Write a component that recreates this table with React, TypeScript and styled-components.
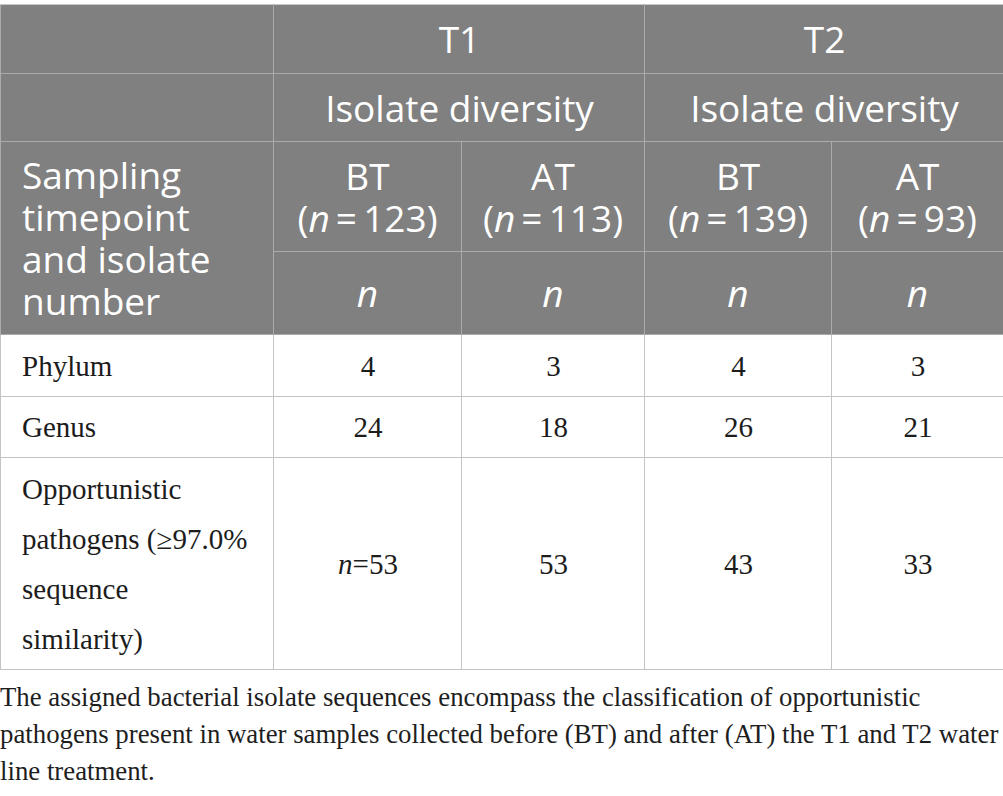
import React from "react";
import styled, { createGlobalStyle } from "styled-components";

const Global = createGlobalStyle`
  html, body { margin: 0; padding: 0; background: #ffffff; }
  body { font-family: "Liberation Serif", "Times New Roman", serif; }
`;

const Page = styled.div`
  padding-top: 4px;
  width: 1003px;
`;

const Table = styled.table`
  width: 1003px;
  border-collapse: collapse;
  table-layout: fixed;
`;

const HeadRow = styled.tr<{ $h: number }>`
  height: ${(p) => p.$h}px;
`;

const HeadCell = styled.th<{ $align?: "left" | "center"; $tight?: boolean }>`
  background: #808080;
  color: #ffffff;
  font-family: "Open Sans", "DejaVu Sans", sans-serif;
  font-weight: 400;
  font-size: 37px;
  line-height: 42px;
  text-align: ${(p) => p.$align ?? "center"};
  vertical-align: middle;
  padding: ${(p) => (p.$tight ? "0 8px" : "0 20px 0 21px")};
  border: 1px solid #ababab;
  border-top-color: #c8c8c8;
  white-space: nowrap;
  em { font-style: italic; }
`;

const WrapHeadCell = styled(HeadCell)`
  white-space: normal;
`;

const Line = styled.span`
  display: block;
  height: 42px;
`;

const BodyRow = styled.tr``;

const BodyCell = styled.td<{ $align?: "left" | "center" }>`
  font-family: "Liberation Serif", "Times New Roman", serif;
  font-size: 29px;
  line-height: 50px;
  color: #1c1c1c;
  text-align: ${(p) => p.$align ?? "center"};
  vertical-align: middle;
  padding: 5.5px 20px 5px 21px;
  border: 1px solid #c4c4c4;
  em { font-style: italic; }
`;

const Caption = styled.p`
  margin: 9px 0 0;
  font-family: "Liberation Serif", "Times New Roman", serif;
  font-size: 26.8px;
  line-height: 37px;
  color: #1e1e1e;
  white-space: nowrap;
`;

const groups = [
  { bt: "123", at: "113" },
  { bt: "139", at: "93" },
];

const rows: { label: React.ReactNode; values: React.ReactNode[] }[] = [
  { label: "Phylum", values: ["4", "3", "4", "3"] },
  { label: "Genus", values: ["24", "18", "26", "21"] },
  {
    label: "Opportunistic pathogens (≥97.0% sequence similarity)",
    values: [
      <>
        <em>n</em>=53
      </>,
      "53",
      "43",
      "33",
    ],
  },
];

const Count = ({ v }: { v: string }) => (
  <>
    (<em>n</em>{"\u2009=\u2009"}
    {v})
  </>
);

export default function App() {
  return (
    <Page>
      <Global />
      <Table>
        <colgroup>
          <col style={{ width: 273 }} />
          <col style={{ width: 188 }} />
          <col style={{ width: 183 }} />
          <col style={{ width: 187 }} />
          <col style={{ width: 172 }} />
        </colgroup>
        <thead>
          <HeadRow $h={69}>
            <HeadCell />
            <HeadCell colSpan={2}>T1</HeadCell>
            <HeadCell colSpan={2}>T2</HeadCell>
          </HeadRow>
          <HeadRow $h={68}>
            <HeadCell />
            <HeadCell colSpan={2}>Isolate diversity</HeadCell>
            <HeadCell colSpan={2}>Isolate diversity</HeadCell>
          </HeadRow>
          <HeadRow $h={110}>
            <WrapHeadCell rowSpan={2} $align="left">
              Sampling timepoint and isolate number
            </WrapHeadCell>
            {groups.map((g, i) => (
              <React.Fragment key={i}>
                <HeadCell $tight>
                  <Line>BT</Line>
                  <Line>
                    <Count v={g.bt} />
                  </Line>
                </HeadCell>
                <HeadCell $tight>
                  <Line>AT</Line>
                  <Line>
                    <Count v={g.at} />
                  </Line>
                </HeadCell>
              </React.Fragment>
            ))}
          </HeadRow>
          <HeadRow $h={83}>
            {[0, 1, 2, 3].map((i) => (
              <HeadCell key={i} $tight>
                <em>n</em>
              </HeadCell>
            ))}
          </HeadRow>
        </thead>
        <tbody>
          {rows.map((r, i) => (
            <BodyRow key={i}>
              <BodyCell $align="left">{r.label}</BodyCell>
              {r.values.map((v, j) => (
                <BodyCell key={j}>{v}</BodyCell>
              ))}
            </BodyRow>
          ))}
        </tbody>
      </Table>
      <Caption>
        The assigned bacterial isolate sequences encompass the classification of opportunistic
        <br />
        pathogens present in water samples collected before (BT) and after (AT) the T1 and T2 water
        <br />
        line treatment.
      </Caption>
    </Page>
  );
}
